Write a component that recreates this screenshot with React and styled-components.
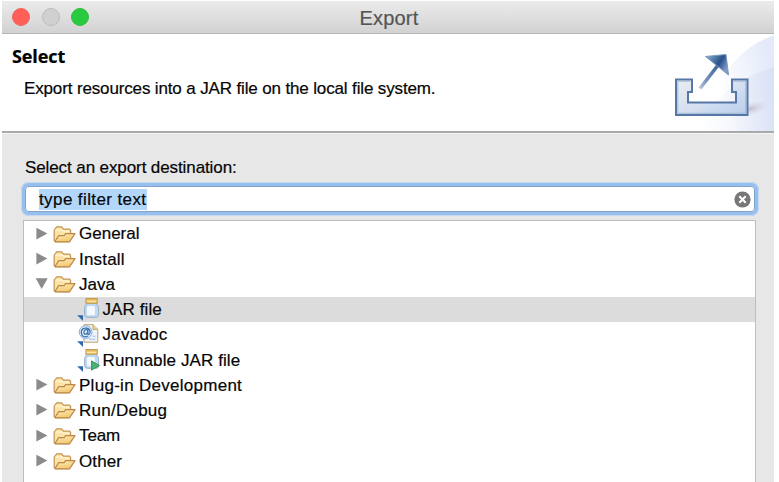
import React from "react";
import styled, { createGlobalStyle } from "styled-components";

const GlobalStyle = createGlobalStyle`
  * { box-sizing: border-box; }
  body {
    margin: 0;
    background: #fff;
    overflow: hidden;
    font-family: "Liberation Sans", Arial, sans-serif;
    color: #050505;
    -webkit-text-stroke: 0.2px currentColor;
  }
`;

const Window = styled.main`
  width: 772px;
  height: 482px;
  margin-left: 2px;
  padding-top: 1px;
  display: flex;
  flex-direction: column;
  overflow: hidden;
`;

const TitleBar = styled.header`
  height: 33px;
  flex: none;
  display: grid;
  grid-template-columns: 120px 1fr 120px;
  align-items: center;
  background: linear-gradient(#ebebeb, #d2d2d2);
  border-bottom: 1px solid #b4b4b4;
`;

const Lights = styled.div`
  display: flex;
  gap: 11.5px;
  padding-left: 10px;
`;

const Light = styled.span`
  width: 18px;
  height: 18px;
  border-radius: 50%;
  background: ${(p) => p.$color};
  border: 1px solid ${(p) => p.$edge};
`;

const Title = styled.h1`
  margin: 1px 0 0 2px;
  text-align: center;
  font-size: 20px;
  line-height: 22px;
  font-weight: 400;
  letter-spacing: 0.2px;
  color: #555;
`;

const Banner = styled.section`
  height: 97px;
  flex: none;
  display: flex;
  justify-content: space-between;
  background: #fff;
`;

const BannerText = styled.div`
  padding: 11px 0 0 10px;
`;

const Heading = styled.h2`
  margin: 0;
  font-family: "Open Sans", "Noto Sans", sans-serif;
  font-size: 18px;
  line-height: 22px;
  font-weight: 700;
  letter-spacing: -0.1px;
  color: #000;
`;

const Description = styled.p`
  margin: 12px 0 0 12px;
  font-size: 17px;
  line-height: 20px;
  letter-spacing: -0.14px;
  white-space: nowrap;
`;

const Body = styled.section`
  flex: 1;
  min-height: 0;
  display: flex;
  flex-direction: column;
  background: #e7e7e7;
  border-top: 2px solid #a9a9a9;
  box-shadow: inset 0 1px #f6f6f6;
  padding: 25px 15px 0 19px;
`;

const Label = styled.label`
  margin-left: 4px;
  font-size: 17px;
  line-height: 20px;
  letter-spacing: -0.1px;
`;

const Field = styled.div`
  flex: none;
  height: 34px;
  margin-top: 4px;
  display: flex;
  align-items: center;
  justify-content: space-between;
  border: 4px solid #96bfee;
  outline: 1px solid #c7daf0;
  outline-offset: -1px;
  border-radius: 8px;
  background: #fff;
  box-shadow: inset 0 0 0 1px #83a5cc;
  padding: 0 4px 0 14px;
`;

const Selection = styled.span`
  background: #b3d6fb;
  font-size: 17px;
  line-height: 21px;
  letter-spacing: 0.4px;
`;

const Tree = styled.ul`
  flex: 1;
  min-height: 0;
  margin: 4px 3px 0 2px;
  padding: 0;
  list-style: none;
  background: #fff;
  border: 1px solid #bdbdbd;
  border-bottom: 0;
  overflow: hidden;
`;

const Row = styled.li`
  height: 25.25px;
  display: flex;
  align-items: center;
  padding-left: ${(p) => (p.$child ? "53px" : "12px")};
  background: ${(p) => (p.$selected ? "#dcdcdc" : "transparent")};
`;

const RowText = styled.span`
  font-size: 17px;
  line-height: 20px;
  padding-top: 1.6px;
  letter-spacing: ${(p) => p.$track || 0}px;
  margin-left: ${(p) => (p.$child ? "1.5px" : "3px")};
  white-space: nowrap;
`;

const Icon = styled.svg`
  flex: none;
  display: block;
  overflow: visible;
`;

const Twisty = styled(Icon)`
  margin-right: 5px;
`;

function ExportArt() {
  return (
    <Icon width="136" height="97" viewBox="0 0 136 97">
      <defs>
        <linearGradient id="sweep" x1="0.3" y1="0.7" x2="1" y2="0.4">
          <stop offset="0" stopColor="#fff" />
          <stop offset="1" stopColor="#e4eaf9" />
        </linearGradient>
        <linearGradient id="sweepLow" x1="0" y1="0.5" x2="1" y2="0.5">
          <stop offset="0" stopColor="#e7ecfa" stopOpacity="0" />
          <stop offset="1" stopColor="#d3dcf4" />
        </linearGradient>
        <linearGradient id="tray" x1="0" y1="0" x2="1" y2="1">
          <stop offset="0" stopColor="#e9eef4" />
          <stop offset="0.5" stopColor="#d6e0f0" />
          <stop offset="1" stopColor="#b8cdec" />
        </linearGradient>
        <linearGradient id="shaft" x1="1" y1="0" x2="0" y2="1">
          <stop offset="0" stopColor="#39649d" />
          <stop offset="0.65" stopColor="#7692ba" />
          <stop offset="1" stopColor="#b9c8dc" />
        </linearGradient>
        <linearGradient id="head" x1="0" y1="0" x2="1" y2="0.5">
          <stop offset="0" stopColor="#91b7cf" />
          <stop offset="0.65" stopColor="#28528b" />
          <stop offset="1" stopColor="#8298c5" />
        </linearGradient>
        <radialGradient id="shade">
          <stop offset="0" stopColor="#a79ead" stopOpacity="0.6" />
          <stop offset="1" stopColor="#cbc8d8" stopOpacity="0" />
        </radialGradient>
      </defs>
      <path d="M136 1C105 13 78 36 65 97H136Z" fill="url(#sweep)" />
      <path d="M136 33C102 43 74 63 59 97H136Z" fill="url(#sweepLow)" opacity="0.65" />
      <ellipse cx="112" cy="75" rx="18" ry="7" fill="url(#shade)" transform="rotate(-15 112 75)" />
      <path
        d="M38 45.5H54V58H50V68.5H98V58H94V45.5H109.5V81H38Z"
        fill="url(#tray)"
        stroke="#5777a7"
        strokeWidth="2"
      />
      <path d="M39.8 47.2H52.3M39.8 47.2V79.3H107.8V47.2H95.8" fill="none" stroke="#a3bad5" strokeWidth="1" />
      <path d="M62 54.5L80.5 30.5" stroke="url(#shaft)" strokeWidth="3.6" />
      <path d="M67.5 22.5L88 20.5L90.5 41Z" fill="url(#head)" stroke="#7898bd" strokeWidth="1" />
    </Icon>
  );
}

function Arrow({ open }) {
  return (
    <Twisty width="12" height="14" viewBox="0 0 12 14">
      <path d={open ? "M-.3 1.2H11.7L5.7 12Z" : "M.4 .8L11.4 6.6L.4 12.4Z"} fill="#8b8b8b" />
    </Twisty>
  );
}

function Folder() {
  return (
    <Icon width="23" height="18" viewBox="0 0 23 18">
      <defs>
        <linearGradient id="folderFront" x1="0" y1="0" x2="0.5" y2="1">
          <stop offset="0" stopColor="#fff0bd" />
          <stop offset="1" stopColor="#f2c770" />
        </linearGradient>
      </defs>
      <path d="M1.2 15.5V5L3.7 1.8H8.7L10.4 4.2H16.6L17.6 5.4V9.2L15.2 16.6H2.2Z" fill="#fae3a5" stroke="#c59355" strokeWidth="1.2" strokeLinejoin="round" />
      <path d="M2.4 5.1H9.4L10.6 6.2H16.2" fill="none" stroke="#fff5d6" strokeWidth="1.2" />
      <path d="M2.1 16.2L5.7 10.6H11.2L12.6 8.6H22L16.5 16.8H2.4Z" fill="url(#folderFront)" stroke="#bd894a" strokeWidth="1.2" strokeLinejoin="round" />
    </Icon>
  );
}

function FileIcon({ kind }) {
  return (
    <Icon width="24" height="24" viewBox="0 -0.7 24 24">
      <path d="M.2 17.5H6V23.2Z" fill="#2f69ab" />
      {kind === "javadoc" ? (
        <>
          <path d="M7 1H16L20.8 5.6V18.5H7Z" fill="#edf4ff" stroke="#c0a366" />
          <path d="M16 1V5.6H20.8" fill="#efd68c" stroke="#c0a366" />
          <path d="M12 15.5H18.5M15.5 12.5H18.5" stroke="#a9bbdc" />
          <circle cx="8.6" cy="8.4" r="6.4" fill="#dceafa" stroke="#8db1da" strokeWidth="1" />
          <path d="M10.9 5.6V9.8C10.9 12 13.6 10.6 13.1 7.6C12.1 2.7 4.1 3.6 4.3 8.9C4.6 13.2 8.3 13.8 10.8 12.3M10.9 7.8C9.9 4.7 6.7 5.9 6.9 8.7C7.1 11.6 10.9 10.7 10.9 7.8" fill="none" stroke="#3c71ac" strokeWidth="1.25" />
        </>
      ) : (
        <>
          <path d="M10.4 5.5H18.6L20.4 7.4Q21.6 8.4 21.6 10V17Q21.6 19.6 19 19.6H10.2Q7.6 19.6 7.6 17V10Q7.6 8.4 8.8 7.4Z" fill="#bfd9f2" stroke="#9ab0c4" strokeWidth="1" />
          <rect x="10" y="8.3" width="8" height="9.3" rx="1.5" fill="#f4f9ff" />
          <path d="M9 1H20.2V5.4H9Z" fill="#fbe6a0" stroke="#c59b49" strokeWidth="1.2" />
          <path d="M9.8 2.2H19.4" stroke="#dcae50" strokeWidth="1.2" />
          {kind === "run" && <path d="M14.6 12.2L22.4 16.8L14.6 21.4Z" fill="#4bb370" stroke="#2f9455" strokeWidth="1" />}
        </>
      )}
    </Icon>
  );
}

function ClearIcon() {
  return (
    <Icon width="17" height="17" viewBox="0 0 17 17">
      <circle cx="8.5" cy="8.5" r="8.1" fill="#777" />
      <path d="M5.3 5.3L11.7 11.7M11.7 5.3L5.3 11.7" stroke="#fff" strokeWidth="2.1" />
    </Icon>
  );
}

const items = [
  { name: "General" },
  { name: "Install", track: 0.2 },
  { name: "Java", open: true },
  { name: "JAR file", kind: "jar", selected: true, track: 0.1 },
  { name: "Javadoc", kind: "javadoc", track: 0.25 },
  { name: "Runnable JAR file", kind: "run", track: 0.1 },
  { name: "Plug-in Development", track: 0.28 },
  { name: "Run/Debug", track: 0.25 },
  { name: "Team", track: -0.1 },
  { name: "Other", track: 0.1 },
];

export default function App() {
  return (
    <>
      <GlobalStyle />
      <Window>
        <TitleBar>
          <Lights>
            <Light $color="#ff5f57" $edge="#ee655e" />
            <Light $color="#d0d0d0" $edge="#bcbcbc" />
            <Light $color="#28ca40" $edge="#30bd43" />
          </Lights>
          <Title>Export</Title>
        </TitleBar>
        <Banner>
          <BannerText>
            <Heading>Select</Heading>
            <Description>Export resources into a JAR file on the local file system.</Description>
          </BannerText>
          <ExportArt />
        </Banner>
        <Body>
          <Label>Select an export destination:</Label>
          <Field>
            <Selection>type filter text</Selection>
            <ClearIcon />
          </Field>
          <Tree>
            {items.map(({ name, kind, open, selected, track }) => (
              <Row key={name} $child={Boolean(kind)} $selected={selected}>
                {kind ? (
                  <FileIcon kind={kind} />
                ) : (
                  <>
                    <Arrow open={open} />
                    <Folder />
                  </>
                )}
                <RowText $child={Boolean(kind)} $track={track}>{name}</RowText>
              </Row>
            ))}
          </Tree>
        </Body>
      </Window>
    </>
  );
}
